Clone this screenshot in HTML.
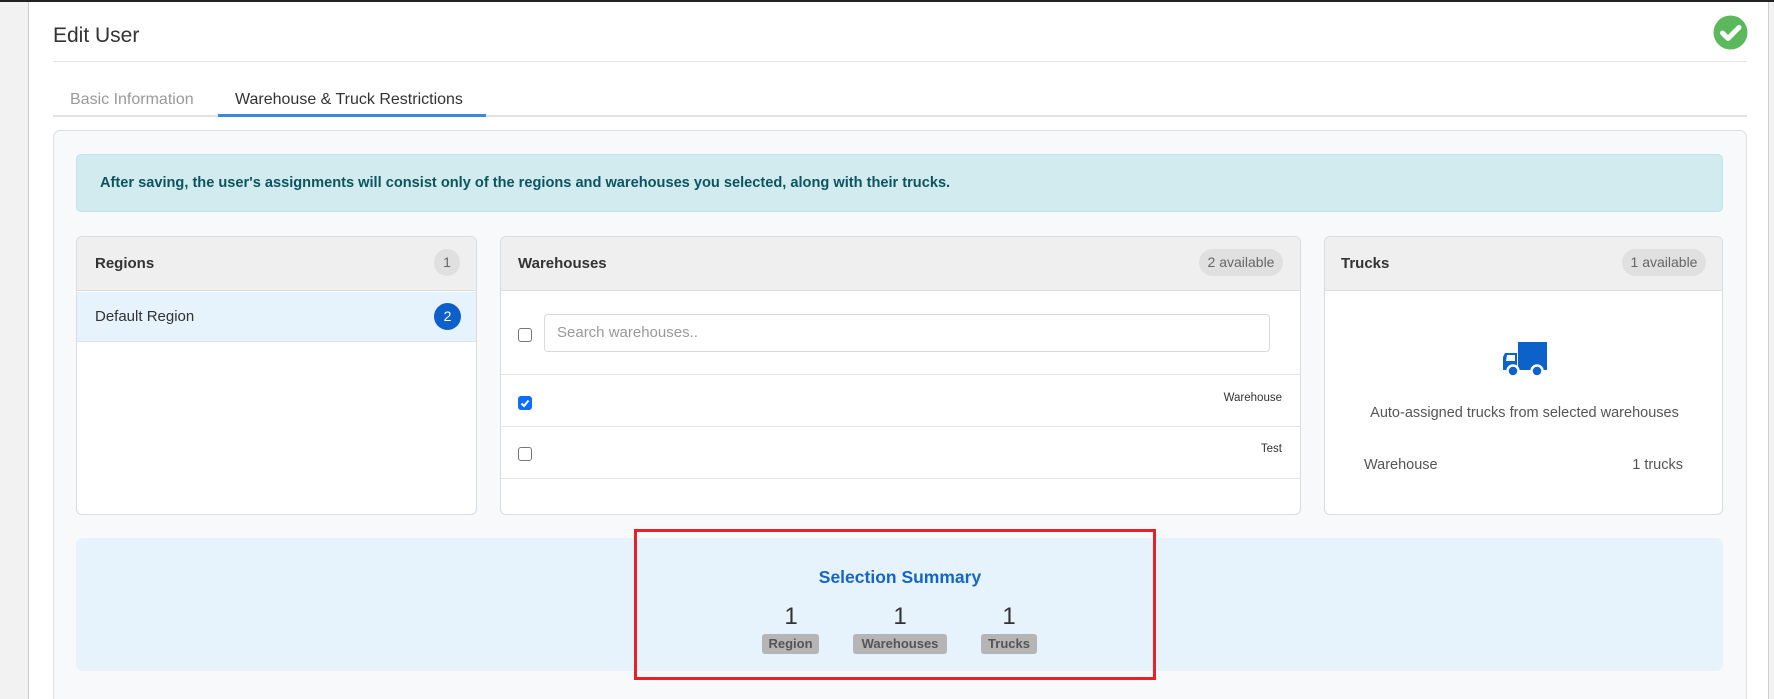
<!DOCTYPE html>
<html><head><meta charset="utf-8"><style>
*{box-sizing:border-box;margin:0;padding:0}
html{width:1774px;height:699px;overflow:hidden}
body{width:1774px;height:699px;overflow:hidden;background:#fff;font-family:"Liberation Sans",sans-serif;position:relative;color:#333}
.a{position:absolute}
.card{position:absolute;background:#fff;border:1px solid #dcdcdc;border-radius:6px;overflow:hidden}
.hd{position:absolute;left:0;right:0;top:0;height:54px;background:#efefef;border-bottom:1px solid #ddd}
.ttl{position:absolute;top:18px;font-weight:bold;font-size:15px;color:#333}
.pill{position:absolute;top:12px;height:27px;border-radius:14px;background:#e0e0e0;color:#666;font-size:14px;line-height:27px;text-align:center}
.cb{position:absolute;width:14px;height:14px;border:1px solid #777;border-radius:3px;background:#fff}
.lbl{position:absolute;top:634px;height:20px;background:#b5b5b5;border-radius:3px;color:#555;font-weight:bold;font-size:13px;line-height:20px;text-align:center}
.num{position:absolute;top:603px;font-size:24px;color:#333;width:40px;text-align:center}
</style></head><body>
<div class="a" style="left:0;top:0;width:1774px;height:2px;background:#222"></div>
<div class="a" style="left:0;top:2px;width:29px;height:697px;background:#f2f2f2;border-right:1px solid #ccc"></div>
<div class="a" style="left:1768px;top:2px;width:6px;height:697px;background:#f2f2f2;border-left:1px solid #ccc"></div>
<div class="a" style="left:53px;top:24px;font-size:21px;color:#333">Edit User</div>
<div class="a" style="left:53px;top:61px;width:1694px;height:1px;background:#e3e3e3"></div>
<svg class="a" style="left:1713px;top:15px" width="35" height="35" viewBox="0 0 35 35"><circle cx="17.5" cy="17.5" r="17" fill="#5cb85c"/><path d="M9.5 18l5.5 5.5 11-11" stroke="#fff" stroke-width="5" fill="none" stroke-linecap="round" stroke-linejoin="round"/></svg>
<div class="a" style="left:70px;top:91px;font-size:16px;color:#999">Basic Information</div>
<div class="a" style="left:235px;top:91px;font-size:16px;color:#333">Warehouse &amp; Truck Restrictions</div>
<div class="a" style="left:53px;top:115px;width:1694px;height:2px;background:#e3e3e3"></div>
<div class="a" style="left:218px;top:114px;width:268px;height:3px;background:#3b86e0"></div>
<div class="a" style="left:53px;top:130px;width:1694px;height:600px;background:#f8f9fa;border:1px solid #e0e0e0;border-radius:7px"></div>
<div class="a" style="left:76px;top:154px;width:1647px;height:58px;background:#d2ebef;border:1px solid #bee5eb;border-radius:5px"></div>
<div class="a" style="left:100px;top:175px;font-size:14.6px;font-weight:bold;color:#0c5460">After saving, the user's assignments will consist only of the regions and warehouses you selected, along with their trucks.</div>

<div class="card" style="left:76px;top:236px;width:401px;height:279px">
 <div class="hd"></div><div class="ttl" style="left:18px">Regions</div>
 <div class="pill" style="left:357px;width:26px">1</div>
 <div class="a" style="left:0;top:55px;width:401px;height:50px;background:#e6f2fc;border-bottom:1px solid #e3e3e3"></div>
 <div class="a" style="left:18px;top:71px;font-size:15px;color:#333">Default Region</div>
 <div class="a" style="left:357px;top:66px;width:27px;height:27px;border-radius:50%;background:#0d5fc9;color:#fff;font-size:14px;line-height:27px;text-align:center">2</div>
</div>

<div class="card" style="left:500px;top:236px;width:801px;height:279px">
 <div class="hd"></div><div class="ttl" style="left:17px">Warehouses</div>
 <div class="pill" style="left:698px;width:84px">2 available</div>
 <div class="cb" style="left:17px;top:91px"></div>
 <div class="a" style="left:43px;top:77px;width:726px;height:38px;border:1px solid #d9d9d9;border-radius:4px;font-size:15px;color:#999;padding:9px 12px">Search warehouses..</div>
 <div class="a" style="left:0;top:137px;width:801px;height:1px;background:#e3e3e3"></div>
 <div class="a" style="left:17px;top:159px;width:14px;height:14px;border-radius:3px;background:#0d6efd"><svg width="14" height="14"><path d="M3.5 7.5l2.5 2.5 4.5-5.5" stroke="#fff" stroke-width="2" fill="none"/></svg></div>
 <div class="a" style="right:18px;top:155px;font-size:11.5px;color:#333">Warehouse</div>
 <div class="a" style="left:0;top:189px;width:801px;height:1px;background:#e3e3e3"></div>
 <div class="cb" style="left:17px;top:210px"></div>
 <div class="a" style="right:18px;top:206px;font-size:11.5px;color:#333">Test</div>
 <div class="a" style="left:0;top:241px;width:801px;height:1px;background:#e3e3e3"></div>
</div>

<div class="card" style="left:1324px;top:236px;width:399px;height:279px">
 <div class="hd"></div><div class="ttl" style="left:16px">Trucks</div>
 <div class="pill" style="left:297px;width:84px">1 available</div>
 <svg class="a" style="left:178px;top:105px" width="44" height="36" viewBox="0 0 44 36"><path d="M15 0h29v28H15z M2 11h12v17H0V15z" fill="#0d62c9"/><path d="M4 13h8v6H3z" fill="#fff"/><circle cx="10" cy="29" r="5.5" fill="#0d62c9" stroke="#fff" stroke-width="2.5"/><circle cx="34" cy="29" r="5.5" fill="#0d62c9" stroke="#fff" stroke-width="2.5"/></svg>
 <div class="a" style="left:0;width:399px;top:168px;text-align:center;font-size:14.5px;color:#555">Auto-assigned trucks from selected warehouses</div>
 <div class="a" style="left:39px;top:220px;font-size:14.5px;color:#555">Warehouse</div>
 <div class="a" style="right:39px;top:220px;font-size:14.5px;color:#555">1 trucks</div>
</div>

<div class="a" style="left:76px;top:538px;width:1647px;height:133px;background:#e6f2fc;border-radius:7px"></div>
<div class="a" style="left:634px;top:529px;width:522px;height:151px;border:3px solid #e8202a"></div>
<div class="a" style="left:634px;width:532px;top:567px;text-align:center;font-size:17.5px;font-weight:bold;color:#1565c8">Selection Summary</div>
<div class="num" style="left:771px">1</div>
<div class="num" style="left:880px">1</div>
<div class="num" style="left:989px">1</div>
<div class="lbl" style="left:762px;width:57px">Region</div>
<div class="lbl" style="left:853px;width:94px">Warehouses</div>
<div class="lbl" style="left:981px;width:56px">Trucks</div>
</body></html>
